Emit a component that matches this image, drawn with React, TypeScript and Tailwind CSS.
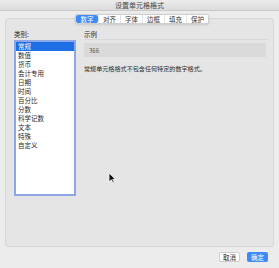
const tabs = ['数字', '对齐', '字体', '边框', '填充', '保护'];
const categories = ['常规', '数值', '货币', '会计专用', '日期', '时间', '百分比', '分数', '科学记数', '文本', '特殊', '自定义'];

export default function App() {
  return (
    <div
      className="relative w-[279px] h-[268px] bg-[#ececec] text-[#2b2b2b] overflow-hidden"
      style={{ fontFamily: '"Noto Sans CJK SC", "Liberation Sans", sans-serif' }}
    >
      <div className="h-[11px] bg-gradient-to-b from-[#ebebeb] to-[#dcdcdc] border-b border-[#c8c8c8] flex items-center justify-center">
        <span className="text-[7px] leading-none text-[#4a4a4a]">设置单元格格式</span>
      </div>

      <div className="relative mx-[5px] mt-[7px] h-[229px] rounded-[3px] border border-[#d6d6d6] bg-[#e5e5e5]">
        <div className="absolute -top-[5px] left-[69px] flex h-[10px] rounded-[2px] border border-[#cfcfcf] bg-white shadow-sm">
          {tabs.map((t, i) => (
            <div
              key={t}
              className={`w-[22px] flex items-center justify-center text-[6.5px] leading-none ${
                i === 0 ? 'bg-[#3d8af7] text-white rounded-[2px]' : 'text-[#333] border-l border-[#e2e2e2]'
              }`}
            >
              {t}
            </div>
          ))}
        </div>

        <div className="flex gap-[8px] pl-[8px] pr-[7px] pt-[10px]">
          <div className="flex flex-col w-[62px]">
            <div className="text-[6.5px] leading-[10px] h-[11px]">类别:</div>
            <div className="h-[156px] border-2 border-[#8ca6e6] bg-white">
              {categories.map((c, i) => (
                <div
                  key={c}
                  className={`h-[9px] pl-[2px] text-[6.5px] leading-[9px] ${
                    i === 0 ? 'bg-[#1e6ee6] text-white' : 'text-[#2b2b2b]'
                  }`}
                >
                  {c}
                </div>
              ))}
            </div>
          </div>

          <div className="flex-1 flex flex-col">
            <div className="text-[6.5px] leading-[10px] h-[11px] border-b border-[#d8d8d8] -mr-[2px]">示例</div>
            <div className="mt-[3px] h-[14px] bg-[#dadada] flex items-center pl-[5px] text-[6px] text-[#555]">366</div>
            <div className="mt-[7px] text-[6.1px] leading-[9px]">常规单元格格式不包含任何特定的数字格式。</div>
          </div>
        </div>
      </div>

      <div className="flex justify-end gap-[7px] pr-[11px] pt-[5px]">
        <div className="w-[21px] h-[10px] bg-white border border-[#cfcfcf] rounded-[2px] flex items-center justify-center text-[6.5px] leading-none">取消</div>
        <div className="w-[21px] h-[10px] bg-[#3d8af7] rounded-[2px] flex items-center justify-center text-[6.5px] leading-none text-white">确定</div>
      </div>

      <svg className="absolute left-[108px] top-[172px]" width="8" height="12" viewBox="0 0 8 12">
        <path d="M1 1 L1 10 L3.3 7.8 L5 11 L6.3 10.4 L4.7 7.3 L7.5 7.3 Z" fill="#111" stroke="#fff" strokeWidth="0.8" />
      </svg>
    </div>
  );
}
